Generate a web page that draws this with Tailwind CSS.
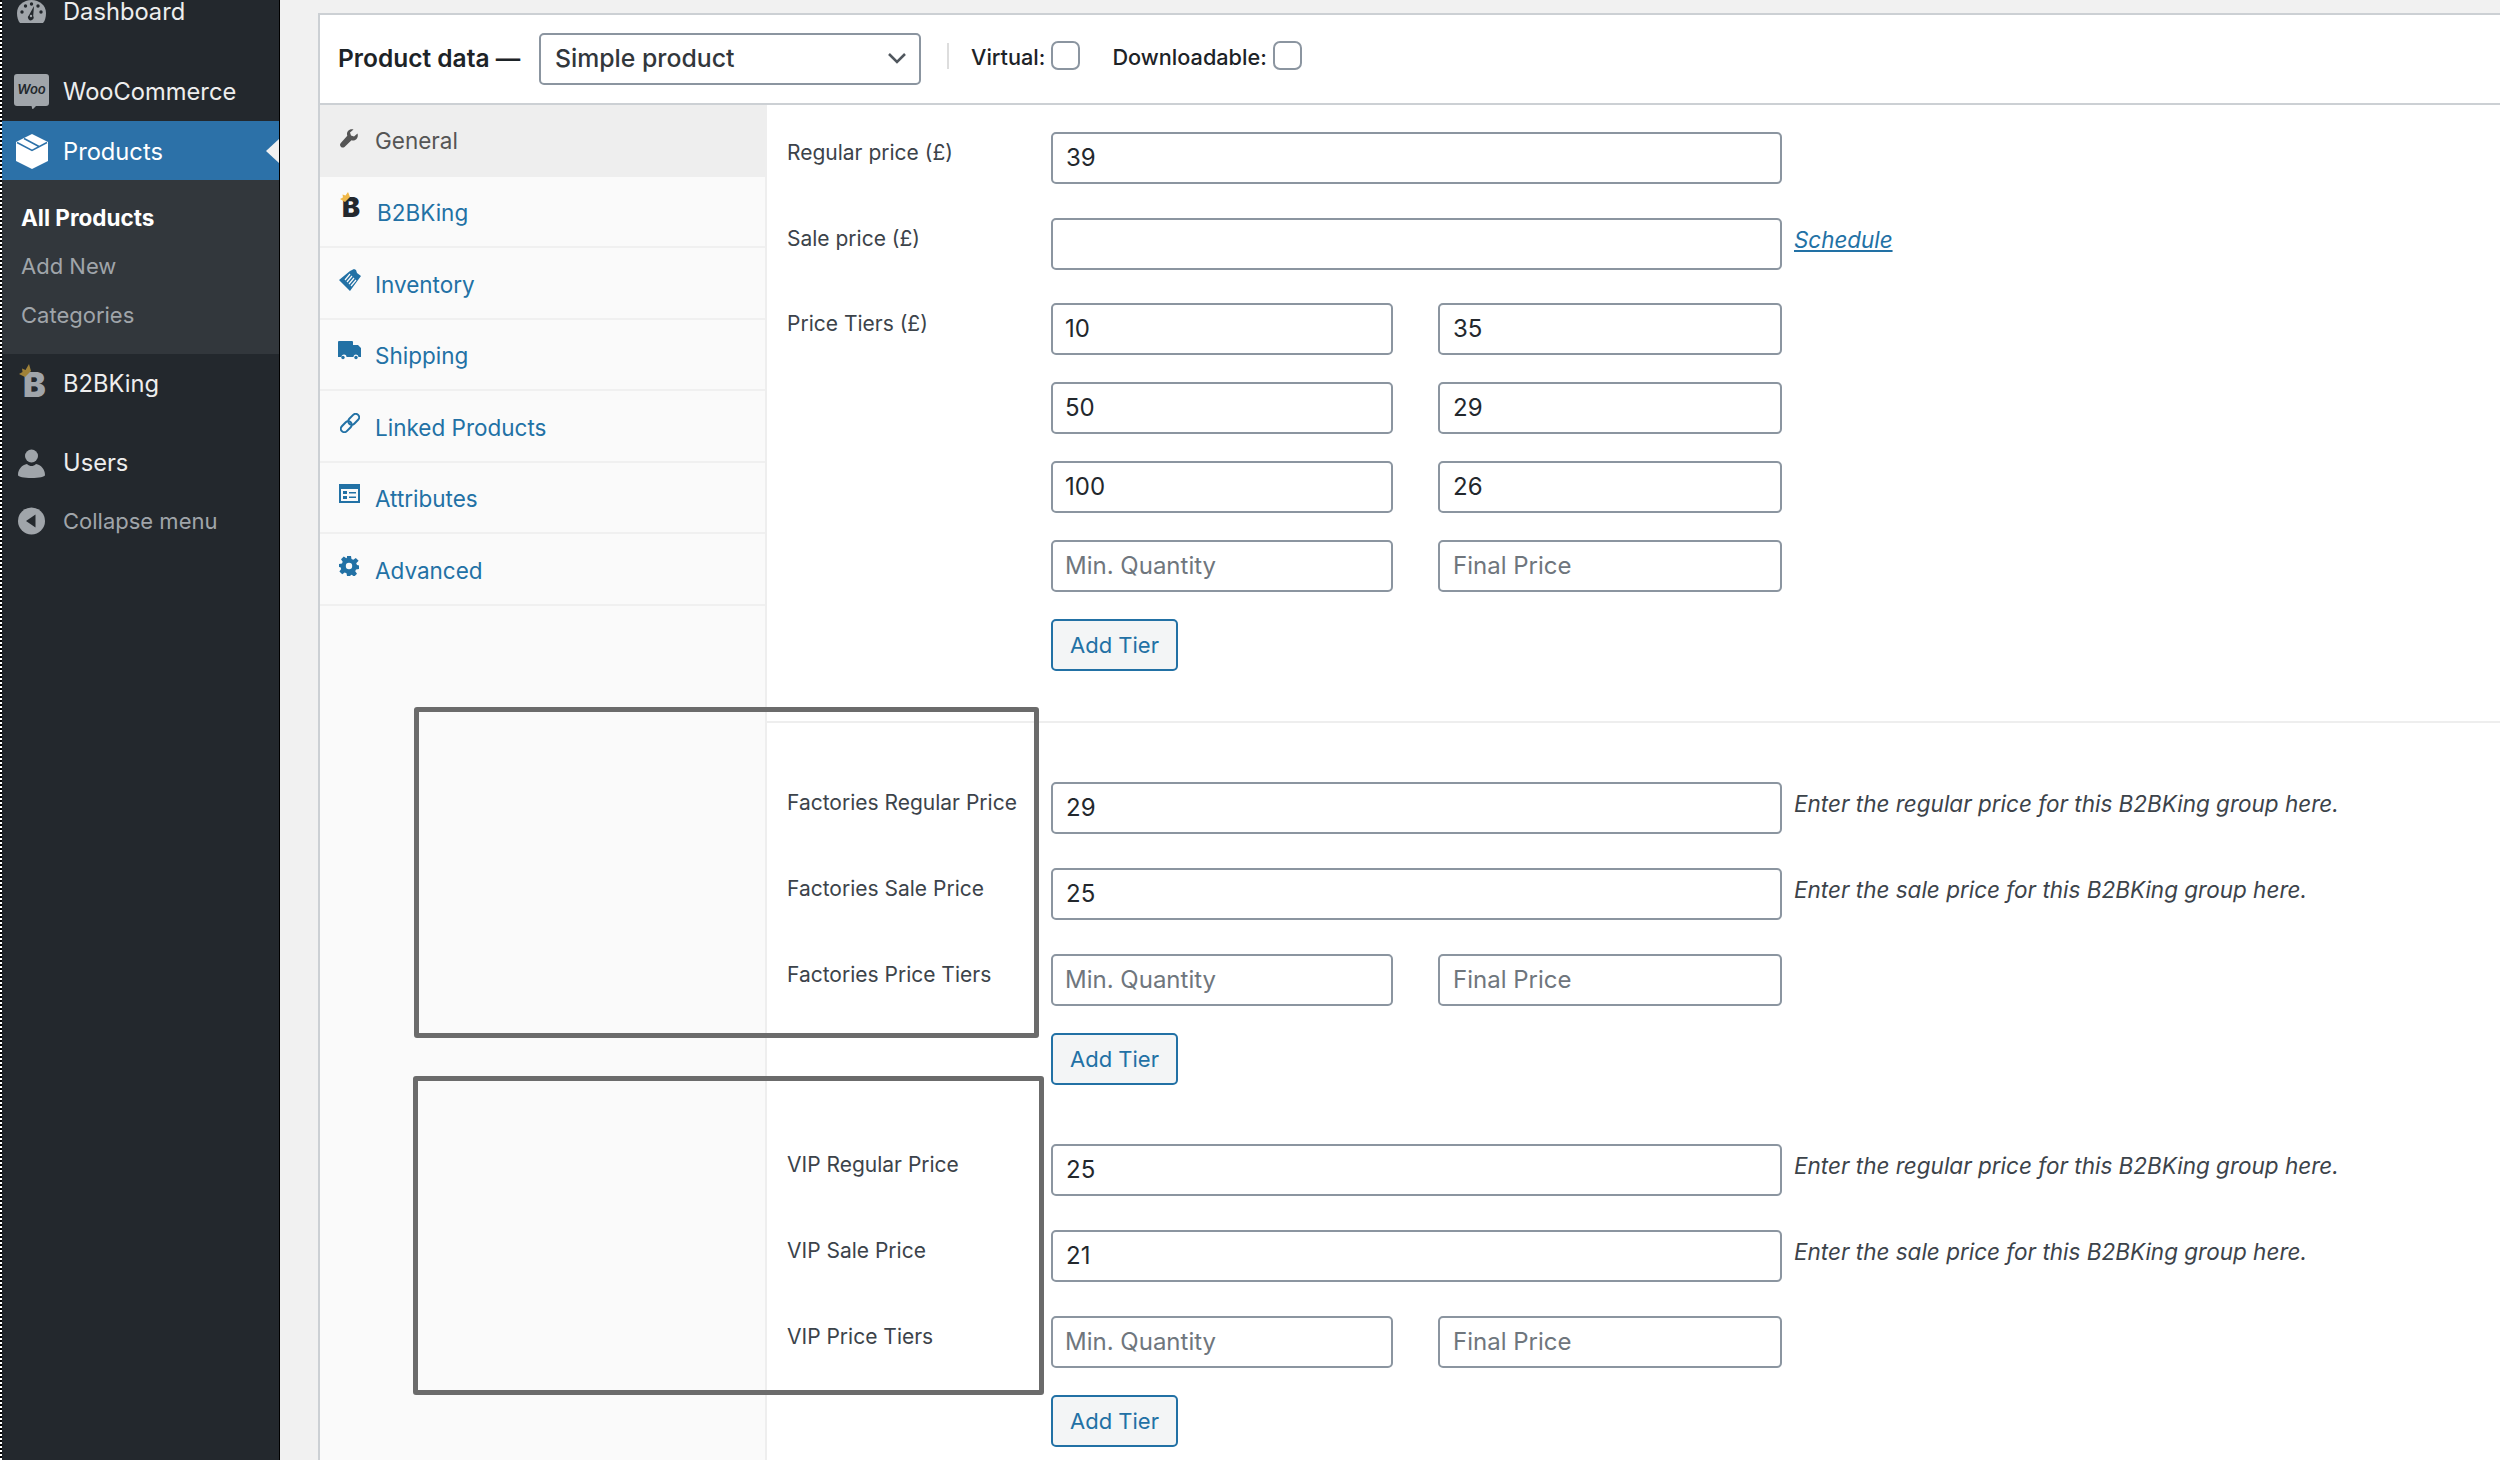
<!DOCTYPE html>
<html lang="en">
  <head>
    <meta charset="UTF-8" />
    <title>Product data</title>
    <script src="https://cdn.jsdelivr.net/npm/@tailwindcss/browser@4"></script>
  </head>
  <body class="bg-[#f1f1f1] font-['Inter',sans-serif]">
    <div class="relative flex h-[1460px] w-[2500px] overflow-hidden">
      <!-- Admin sidebar -->
      <aside class="flex h-full w-[280px] shrink-0 border-r border-black bg-[#23282d] text-[23.7px] text-[#eee]">
        <div class="w-[2px] shrink-0 bg-[repeating-linear-gradient(to_bottom,#000_0_2px,#fff_2px_4px)]"></div>
        <div class="flex-1">
          <div class="flex h-[24px] items-center pl-[15px] leading-[24px]">
            <svg class="mr-[17px] h-[24px] w-[29px] shrink-0" viewBox="0 0 29 24" fill="#a0a5aa"><path d="M14.500 0C6.500 0 0 5.500 0 13c0 4 1 8 3 10h23c2-2 3-6 3-10C29 5.500 22.500 0 14.500 0z"/><g fill="#23282d"><circle cx="5" cy="12" r="1.700"/><circle cx="8.500" cy="6" r="1.700"/><circle cx="14.500" cy="4" r="1.700"/><circle cx="21" cy="6" r="1.700"/><circle cx="24" cy="12" r="1.700"/><path d="M17 6l-.800 10a2.800 2.800 0 1 1-4.200-.700z"/></g><circle cx="14" cy="16" r="1.200" fill="#a0a5aa"/></svg>
            <span>Dashboard</span>
          </div>
          <div class="mt-[38px] flex h-[59px] items-center pl-[12px]">
            <svg class="mr-[14px] h-[35px] w-[35px] shrink-0" viewBox="0 0 35 35" fill="#a0a5aa"><path d="M3 0h29a3 3 0 0 1 3 3v26a3 3 0 0 1-3 3H22l-3.500 3.500-1-3.500H3a3 3 0 0 1-3-3V3a3 3 0 0 1 3-3z"/><text x="17.500" y="20" text-anchor="middle" font-size="13" font-weight="600" font-style="italic" font-family="Inter" fill="#23282d">Woo</text></svg>
            <span>WooCommerce</span>
          </div>
          <div class="relative flex h-[59px] items-center bg-[#2c71a8] pt-[2px] pl-[14px] text-white">
            <svg class="mr-[15px] h-[35px] w-[32px] shrink-0" viewBox="0 0 32 35" fill="#fff"><path d="M16 0l16 8v19l-16 8-16-8V8z"/><path d="M1 8.500l15 8 15-8M8 4.500l15 8" fill="none" stroke="#2c71a8" stroke-width="1.500"/></svg>
            <span>Products</span>
            <div class="absolute top-[18px] right-0 h-0 w-0 border-y-[12px] border-r-[13px] border-y-transparent border-r-[#f1f1f1]"></div>
          </div>
          <div class="bg-[#32373c] pt-[13px] pb-[14px] text-[22px] text-[#a0a5aa]">
            <div class="flex h-[49px] items-center pl-[19px] text-[22.500px] font-bold text-white">All Products</div>
            <div class="flex h-[49px] items-center pl-[19px]">Add New</div>
            <div class="flex h-[49px] items-center pl-[19px]">Categories</div>
          </div>
          <div class="flex h-[60px] items-center pl-[17px]">
            <svg class="mr-[16px] h-[42px] w-[28px] shrink-0" viewBox="0 0 28 42"><text x="4" y="34" font-size="34" font-weight="900" font-family="Inter" fill="#a0a5aa">B</text><path d="M0 11l3.500-2L3 5.500l3.500 1.500L10 1l2 7-6 6z" fill="#a08238"/></svg>
            <span>B2BKing</span>
          </div>
          <div class="mt-[19px] flex h-[58px] items-center pt-[2px] pl-[16px]">
            <svg class="mr-[18px] h-[29px] w-[27px] shrink-0" viewBox="0 0 27 29" fill="#a0a5aa"><circle cx="13.500" cy="7" r="6.500"/><path d="M0 26c0-6 4-10 9-11 1.500 1.500 3 2 4.500 2s3-.5 4.500-2c5 1 9 5 9 11 0 2-6 3-13.500 3S0 28 0 26z"/></svg>
            <span>Users</span>
          </div>
          <div class="flex h-[60px] items-center pl-[16px] text-[22px] text-[#a0a5aa]">
            <svg class="mr-[18px] h-[28px] w-[27px] shrink-0" viewBox="0 0 27 28"><circle cx="13.500" cy="14" r="13.500" fill="#a0a5aa"/><path d="M17.500 7.500v13L8 14z" fill="#23282d"/></svg>
            <span>Collapse menu</span>
          </div>
        </div>
      </aside>

      <!-- Product data metabox -->
      <main class="mt-[13px] ml-[38px] flex-1 border-t-2 border-l-2 border-[#ccd0d4] bg-white">
        <div class="flex h-[90px] items-center border-b-2 border-[#ccd0d4] text-[#1d2327]">
          <span class="mb-[2px] ml-[18px] w-[201px] text-[24.500px] font-semibold">Product data —</span>
          <div class="relative flex h-[52px] w-[382px] items-center rounded-[5px] border-2 border-[#8b95a0] pl-[14px] text-[24.800px] font-medium text-[#32373c]">
            Simple product
            <svg class="absolute top-[17px] right-[12px] h-[12px] w-[20px]" viewBox="0 0 20 12" fill="none" stroke="#50575e" stroke-width="2.500"><path d="M2 2l8 8 8-8"/></svg>
          </div>
          <div class="mb-[6px] ml-[26px] h-[26px] w-[2px] bg-[#ddd]"></div>
          <span class="mb-[3px] ml-[22px] text-[21.700px] font-medium">Virtual:</span>
          <div class="mb-[8px] ml-[6px] h-[29px] w-[29px] rounded-[7px] border-2 border-[#8b95a0]"></div>
          <span class="mb-[3px] ml-[32px] text-[21.700px] font-medium">Downloadable:</span>
          <div class="mb-[8px] ml-[6px] h-[29px] w-[29px] rounded-[7px] border-2 border-[#8b95a0]"></div>
        </div>
        <div class="flex h-full">
          <!-- Tabs -->
          <nav class="w-[447px] shrink-0 border-r-2 border-[#eee] bg-[#fafafa] text-[22.500px] text-[#2271a5]">
            <div class="flex h-[72px] items-center bg-[#eee] pl-[20px] text-[#555]">
              <svg class="mr-[17px] -mt-[6px] h-[19px] w-[18px] shrink-0" viewBox="0 0 18 19" fill="#555"><path d="M17.500 4.500l-3.500 3-3-1-1-3L13.500.500C10.500-.500 7 1.500 7 5c0 .7.100 1.300.300 1.800L.800 14a2.700 2.700 0 0 0 3.700 3.900l7-6.600c3.500 1.200 7.500-2.200 6-6.800z"/></svg>
              General
            </div>
            <div class="flex h-[71px] items-center border-b-2 border-[#f0f0f0] pt-[3px] pl-[20px]">
              <svg class="mr-[16px] -mt-[13px] h-[34px] w-[21px] shrink-0 overflow-visible" viewBox="0 0 21 34"><text x="2" y="27" font-size="27" font-weight="900" font-family="Inter" fill="#23282d">B</text><path d="M0 9l3-1.500L2.500 4.500l3 1L8 2l2 5-5 5z" fill="#f0b849"/></svg>
              B2BKing
            </div>
            <div class="flex h-[72px] items-center border-b-2 border-[#f0f0f0] pt-[3px] pl-[19px]">
              <svg class="mr-[14px] -mt-[9px] h-[22px] w-[22px] shrink-0" viewBox="0 0 22 22"><path d="M11 2l4-2 2 1 1 3 4 3-11 15L0 11z" fill="#2271a5"/><path d="M6 11l5-6M8 13l5-6M10 15l5-6M12 17l5-6" stroke="#fafafa" stroke-width="1.200"/></svg>
              Inventory
            </div>
            <div class="flex h-[71px] items-center border-b-2 border-[#f0f0f0] pt-[3px] pl-[18px]">
              <svg class="mr-[14px] -mt-[11px] h-[19px] w-[23px] shrink-0" viewBox="0 0 23 19" fill="#2271a5"><path d="M1 0h13a1 1 0 0 1 1 1v3h5l3 3v9h-2.500a2.500 2.500 0 0 0-5 0h-7a2.500 2.500 0 0 0-5 0H0V1a1 1 0 0 1 1-1z"/><circle cx="5" cy="16.500" r="1.700"/><circle cx="18" cy="16.500" r="1.700"/></svg>
              Shipping
            </div>
            <div class="flex h-[72px] items-center border-b-2 border-[#f0f0f0] pt-[3px] pl-[20px]">
              <svg class="mr-[15px] -mt-[9px] h-[20px] w-[20px] shrink-0" viewBox="0 0 20 20" fill="none" stroke="#2271a5" stroke-width="2"><g transform="rotate(-45 10 10)"><rect x="-1.500" y="6.500" width="12.500" height="7" rx="3.500"/><rect x="9" y="6.500" width="12.500" height="7" rx="3.500"/></g></svg>
              Linked Products
            </div>
            <div class="flex h-[71px] items-center border-b-2 border-[#f0f0f0] pt-[3px] pl-[19px]">
              <svg class="mr-[15px] -mt-[11px] h-[19px] w-[21px] shrink-0" viewBox="0 0 21 19" fill="#2271a5"><path d="M0 0h21v19H0zm2 5v12h17V5z" fill-rule="evenodd"/><path d="M4 7h4v3H4zM4 12h4v3H4zM10 8h7v1.500h-7zM10 12.500h7V14h-7z"/></svg>
              Attributes
            </div>
            <div class="flex h-[72px] items-center border-b-2 border-[#f0f0f0] pt-[3px] pl-[19px]">
              <svg class="mr-[16px] -mt-[9px] h-[20px] w-[20px] shrink-0" viewBox="0 0 20 20" fill="#2271a5"><path d="M8 0h4l.5 3 1.800.8 2.500-1.800 2.800 2.800L17.200 7.300 18 9l2 .5v3.500l-3 .5-.8 1.800 1.800 2.500-2.800 2.800-2.500-1.800-1.700.7L12 20H8l-.5-2.800-1.800-.7-2.500 1.800L.4 15.500l1.800-2.500-.7-1.800L0 11V8l3-.5.7-1.700L2 3.200 4.800.4l2.500 1.800L8 1.500z"/><circle cx="10" cy="10" r="3.200" fill="#fafafa"/></svg>
              Advanced
            </div>
          </nav>

          <!-- Panel content -->
          <div class="flex-1 text-[21px] text-[#3c434a]">
            <section class="border-b-2 border-[#eee] pt-[27px] pb-[50px]">
              <div class="flex h-[52px]">
                <label class="w-[284px] pt-[5px] pl-[20px]">Regular price (£)</label>
                <div class="flex h-[52px] w-[731px] items-center rounded-[5px] border-2 border-[#8b95a0] pl-[13px] text-[24px] text-[#23282d]">39</div>
              </div>
              <div class="mt-[33.500px] flex h-[52px]">
                <label class="w-[284px] pt-[5px] pl-[20px]">Sale price (£)</label>
                <div class="h-[52px] w-[731px] rounded-[5px] border-2 border-[#8b95a0]"></div>
                <a class="ml-[12px] pt-[5px] text-[22.400px] text-[#2271a5] italic underline">Schedule</a>
              </div>
              <div class="mt-[33.500px] flex">
                <label class="w-[284px] pt-[5px] pl-[20px]">Price Tiers (£)</label>
                <div class="grid w-[731px] grid-cols-[342px_344px] gap-x-[45px] gap-y-[27px] text-[24px] text-[#23282d]">
                  <div class="flex h-[52px] items-center rounded-[5px] border-2 border-[#8b95a0] pl-[12px]">10</div>
                  <div class="flex h-[52px] items-center rounded-[5px] border-2 border-[#8b95a0] pl-[13px]">35</div>
                  <div class="flex h-[52px] items-center rounded-[5px] border-2 border-[#8b95a0] pl-[12px]">50</div>
                  <div class="flex h-[52px] items-center rounded-[5px] border-2 border-[#8b95a0] pl-[13px]">29</div>
                  <div class="flex h-[52px] items-center rounded-[5px] border-2 border-[#8b95a0] pl-[12px]">100</div>
                  <div class="flex h-[52px] items-center rounded-[5px] border-2 border-[#8b95a0] pl-[13px]">26</div>
                  <div class="flex h-[52px] items-center rounded-[5px] border-2 border-[#8b95a0] pl-[12px] text-[#6f767d]">Min. Quantity</div>
                  <div class="flex h-[52px] items-center rounded-[5px] border-2 border-[#8b95a0] pl-[13px] text-[#6f767d]">Final Price</div>
                  <div class="col-span-2 flex h-[52px] w-[127px] items-center justify-center rounded-[5px] border-2 border-[#2271a5] bg-[#f3f5f6] text-[22px] text-[#2271a5]">Add Tier</div>
                </div>
              </div>
            </section>

            <section class="pt-[59px]">
              <div class="flex h-[52px]">
                <label class="w-[284px] pt-[5px] pl-[20px]">Factories Regular Price</label>
                <div class="flex h-[52px] w-[731px] items-center rounded-[5px] border-2 border-[#8b95a0] pl-[13px] text-[24px] text-[#23282d]">29</div>
                <span class="ml-[12px] pt-[5px] text-[22.500px] text-[#3c434a] italic">Enter the regular price for this B2BKing group here.</span>
              </div>
              <div class="mt-[34px] flex h-[52px]">
                <label class="w-[284px] pt-[5px] pl-[20px]">Factories Sale Price</label>
                <div class="flex h-[52px] w-[731px] items-center rounded-[5px] border-2 border-[#8b95a0] pl-[13px] text-[24px] text-[#23282d]">25</div>
                <span class="ml-[12px] pt-[5px] text-[22.500px] text-[#3c434a] italic">Enter the sale price for this B2BKing group here.</span>
              </div>
              <div class="mt-[34px] flex">
                <label class="w-[284px] pt-[5px] pl-[20px]">Factories Price Tiers</label>
                <div class="grid w-[731px] grid-cols-[342px_344px] gap-x-[45px] gap-y-[27px] text-[24px] text-[#6f767d]">
                  <div class="flex h-[52px] items-center rounded-[5px] border-2 border-[#8b95a0] pl-[12px]">Min. Quantity</div>
                  <div class="flex h-[52px] items-center rounded-[5px] border-2 border-[#8b95a0] pl-[13px]">Final Price</div>
                  <div class="col-span-2 flex h-[52px] w-[127px] items-center justify-center rounded-[5px] border-2 border-[#2271a5] bg-[#f3f5f6] text-[22px] text-[#2271a5]">Add Tier</div>
                </div>
              </div>
            </section>

            <section class="pt-[59px]">
              <div class="flex h-[52px]">
                <label class="w-[284px] pt-[5px] pl-[20px]">VIP Regular Price</label>
                <div class="flex h-[52px] w-[731px] items-center rounded-[5px] border-2 border-[#8b95a0] pl-[13px] text-[24px] text-[#23282d]">25</div>
                <span class="ml-[12px] pt-[5px] text-[22.500px] text-[#3c434a] italic">Enter the regular price for this B2BKing group here.</span>
              </div>
              <div class="mt-[34px] flex h-[52px]">
                <label class="w-[284px] pt-[5px] pl-[20px]">VIP Sale Price</label>
                <div class="flex h-[52px] w-[731px] items-center rounded-[5px] border-2 border-[#8b95a0] pl-[13px] text-[24px] text-[#23282d]">21</div>
                <span class="ml-[12px] pt-[5px] text-[22.500px] text-[#3c434a] italic">Enter the sale price for this B2BKing group here.</span>
              </div>
              <div class="mt-[34px] flex">
                <label class="w-[284px] pt-[5px] pl-[20px]">VIP Price Tiers</label>
                <div class="grid w-[731px] grid-cols-[342px_344px] gap-x-[45px] gap-y-[27px] text-[24px] text-[#6f767d]">
                  <div class="flex h-[52px] items-center rounded-[5px] border-2 border-[#8b95a0] pl-[12px]">Min. Quantity</div>
                  <div class="flex h-[52px] items-center rounded-[5px] border-2 border-[#8b95a0] pl-[13px]">Final Price</div>
                  <div class="col-span-2 flex h-[52px] w-[127px] items-center justify-center rounded-[5px] border-2 border-[#2271a5] bg-[#f3f5f6] text-[22px] text-[#2271a5]">Add Tier</div>
                </div>
              </div>
            </section>
          </div>
        </div>
      </main>

      <!-- Annotation boxes over the screenshot -->
      <div class="absolute top-[707px] left-[414px] h-[331px] w-[625px] rounded-[3px] border-[5px] border-[#6b6b6b]"></div>
      <div class="absolute top-[1076px] left-[413px] h-[319px] w-[631px] rounded-[3px] border-[5px] border-[#6b6b6b]"></div>
    </div>
  </body>
</html>
